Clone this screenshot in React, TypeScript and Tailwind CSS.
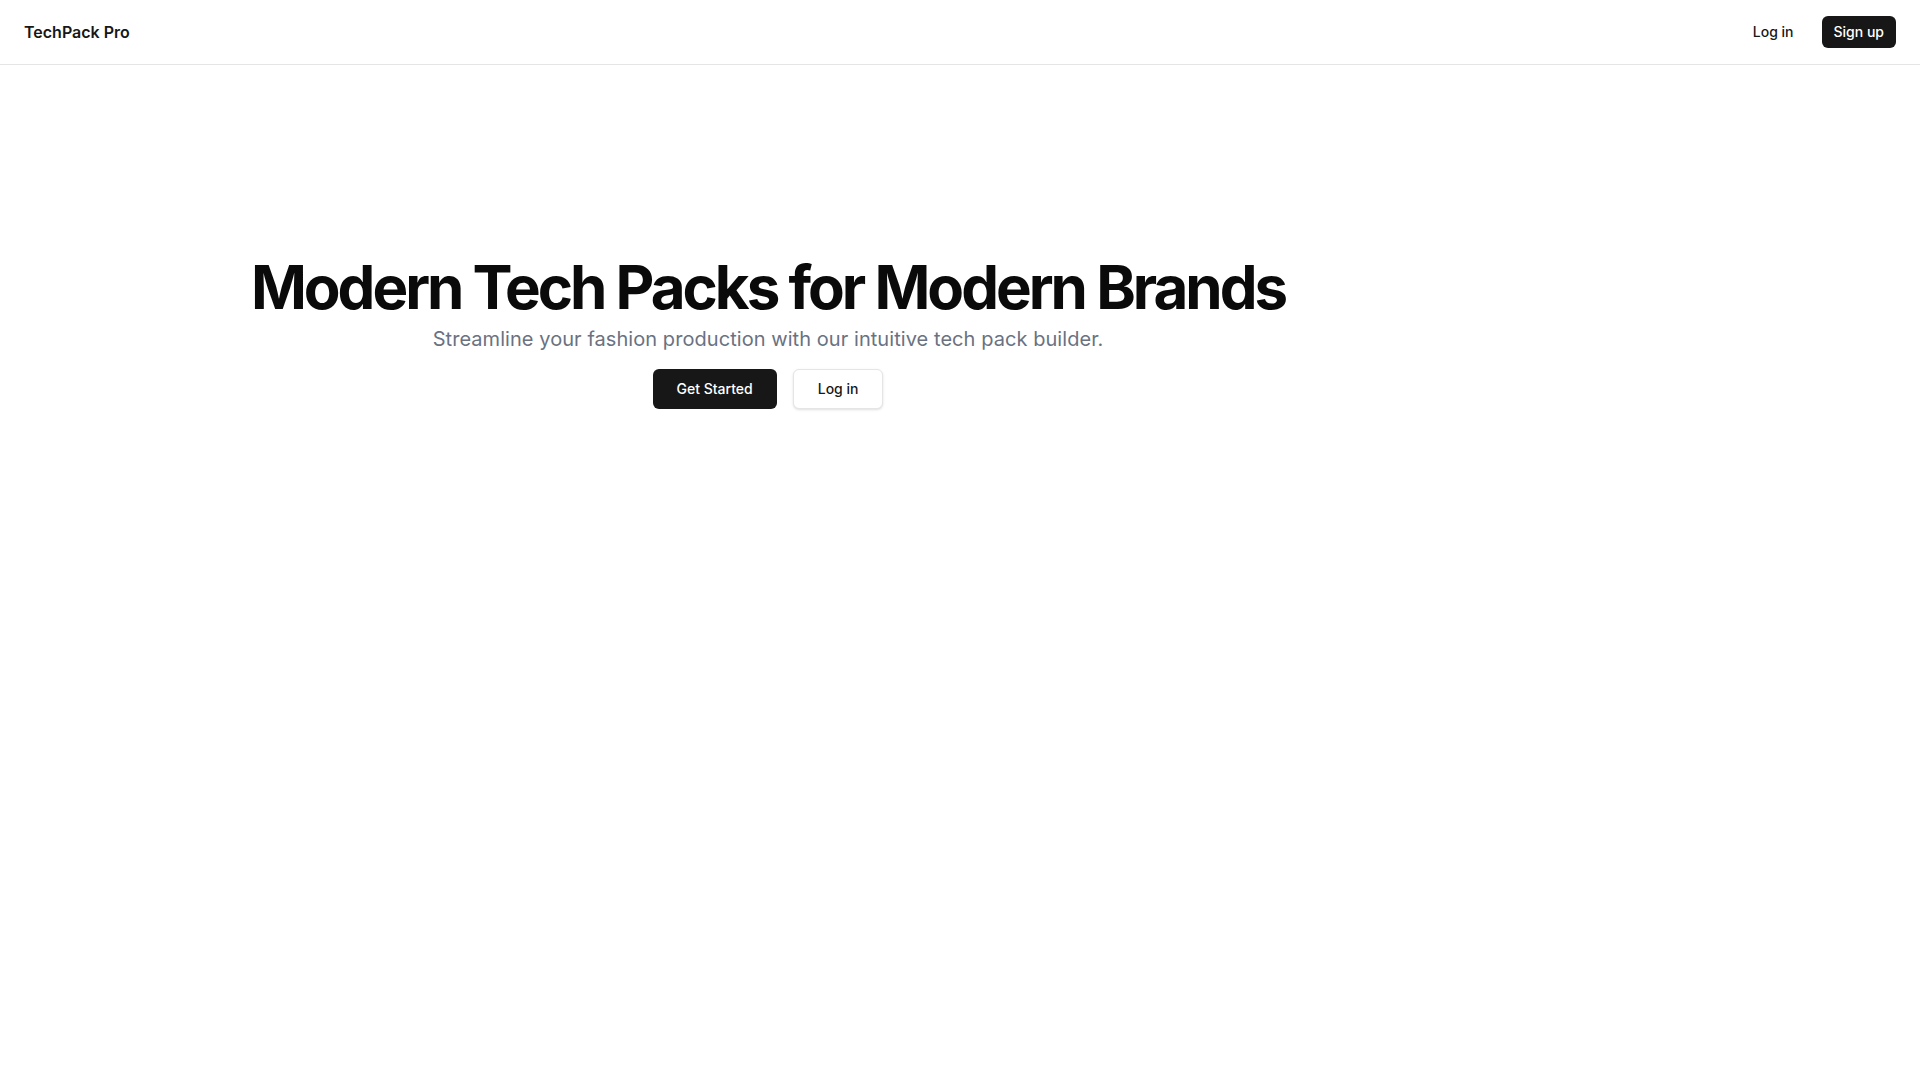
export default function App() {
  return (
    <div className="min-h-screen bg-white text-[#0a0a0a]" style={{ fontFamily: 'Inter, "Noto Sans", sans-serif' }}>
      <header className="h-[65px] px-6 flex items-center border-b border-[#e5e5e5]">
        <span className="text-base font-semibold text-[#171717]">TechPack Pro</span>
        <nav className="ml-auto flex items-center gap-4">
          <button className="h-8 px-3 rounded-md text-sm font-medium text-[#171717]">Log in</button>
          <button className="h-8 px-3 rounded-md text-sm font-medium bg-[#171717] text-white">Sign up</button>
        </nav>
      </header>

      <main>
        <section className="w-full py-48">
          <div className="w-full max-w-[1536px] px-6">
            <div className="flex flex-col items-center text-center space-y-4">
              <div className="space-y-2">
                <h1 className="text-6xl/none font-bold tracking-tighter">
                  Modern Tech Packs for Modern Brands
                </h1>
                <p className="mx-auto max-w-[700px] text-xl text-gray-500 tracking-[0.003em]">
                  Streamline your fashion production with our intuitive tech pack builder.
                </p>
              </div>
              <div className="flex gap-4">
                <button className="h-10 px-6 rounded-md bg-[#171717] text-white text-sm font-medium">Get Started</button>
                <button className="h-10 px-6 rounded-md border border-[#e5e5e5] bg-white shadow-sm text-sm font-medium text-[#171717]">
                  Log in
                </button>
              </div>
            </div>
          </div>
        </section>
      </main>
    </div>
  );
}
